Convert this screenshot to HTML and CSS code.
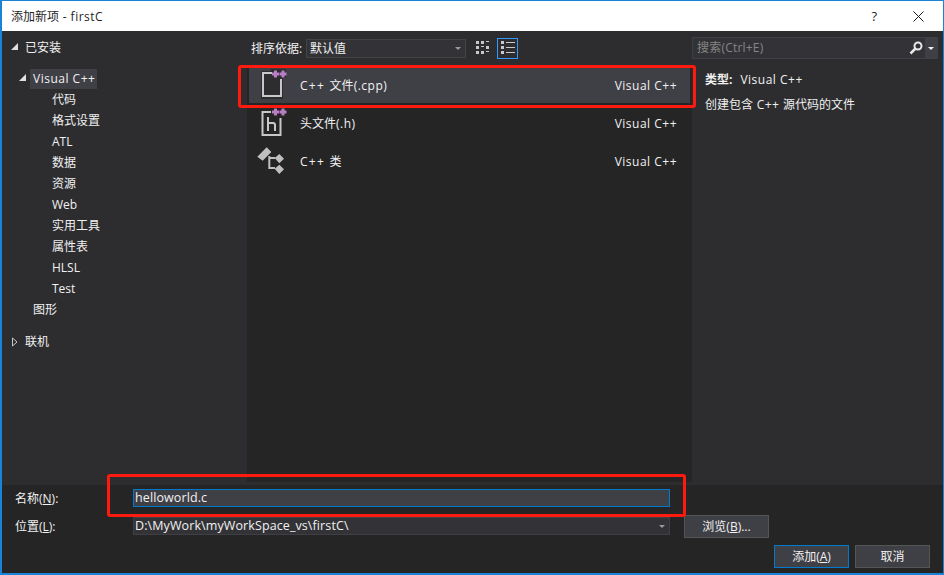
FILE: index.html
```html
<!DOCTYPE html>
<html lang="zh-CN">

<head>
    <meta charset="UTF-8">
    <meta name="viewport" content="width=device-width, initial-scale=1.0">
    <link rel="stylesheet" href="styles.css">
    <title>添加新项 - firstC</title>
</head>

<body>

    <div class="dialog">
        <div class="titlebar">
            <span class="title">添加新项<span class="lat"> - firstC</span></span>
            <span class="help">?</span>
            <svg class="close" width="11" height="11" viewBox="0 0 11 11"><path d="M.5.5l10 10M10.500.5l-10 10" stroke="#1e1e1e" fill="none"/></svg>
        </div>

        <div class="main">
            <div class="side">
                <div class="tree-row tree-top"><span class="arrow open"></span>已安装</div>
                <div class="tree-row tree-lang"><span class="arrow open"></span><span class="selected-node lat">Visual C++</span></div>
                <div class="tree-row tree-sub">代码</div>
                <div class="tree-row tree-sub">格式设置</div>
                <div class="tree-row tree-sub">ATL</div>
                <div class="tree-row tree-sub">数据</div>
                <div class="tree-row tree-sub">资源</div>
                <div class="tree-row tree-sub">Web</div>
                <div class="tree-row tree-sub">实用工具</div>
                <div class="tree-row tree-sub">属性表</div>
                <div class="tree-row tree-sub">HLSL</div>
                <div class="tree-row tree-sub">Test</div>
                <div class="tree-row tree-mid">图形</div>
                <div class="tree-row tree-top tree-online">
                    <svg class="arrow closed" width="6" height="10" viewBox="0 0 6 10"><path d="M.5 1v8L5 5z" fill="none" stroke="#c8c8c8"/></svg>联机
                </div>
            </div>

            <div class="center">
                <div class="toolbar">
                    <span class="sort-label">排序依据:</span>
                    <div class="combo">默认值<span class="combo-arrow"></span></div>
                    <svg class="view-btn" width="16" height="16" viewBox="0 0 16 16" fill="#c8c8c8">
                        <path d="M1 1h3v3H1zM6 1h3v3H6zM11 1h3v1h-3zM1 6h3v3H1zM6 6h3v1H6zM11 6h3v3h-3zM1 11h3v3H1zM6 11h3v3H6zM11 11h3v1h-3z"/>
                    </svg>
                    <div class="view-btn-active">
                        <svg width="16" height="16" viewBox="0 0 16 16" fill="#c8c8c8">
                            <path d="M1 1h3v3H1zM6 2h9v1H6zM1 6h3v3H1zM6 7h9v1H6zM1 11h3v3H1zM6 12h9v1H6z"/>
                        </svg>
                    </div>
                </div>
                <div class="list">
                    <div class="item item-selected">
                        <svg class="item-icon" width="32" height="32" viewBox="0 0 32 32">
                            <path d="M6 2h10V0h15v9h-3v21H6z" fill="#2d2d30"/>
                            <path d="M8 28V4h9M26 10v17H8" fill="none" stroke="#c8c8c8" stroke-width="2"/>
                            <path d="M17 3.500h2v-2h3v2h2v3h-2v2h-3v-2h-2zM24.500 3.500h2v-2h3v2h2v3h-2v2h-3v-2h-2z" fill="#b97fc4"/>
                        </svg>
                        <span class="item-name"><span class="lat-wide">C++ </span>文件<span class="lat">(.cpp)</span></span>
                        <span class="item-type lat">Visual C++</span>
                    </div>
                    <div class="item">
                        <svg class="item-icon" width="32" height="32" viewBox="0 0 32 32">
                            <path d="M7.500 28V4H16M25.500 10v17h-18" fill="none" stroke="#c8c8c8" stroke-width="2"/>
                            <path d="M13 9v14M13 15h5a2 2 0 0 1 2 2v6" fill="none" stroke="#c8c8c8" stroke-width="2"/>
                            <path d="M17 2.500h2v-2h3v2h2v3h-2v2h-3v-2h-2zM24.500 2.500h2v-2h3v2h2v3h-2v2h-3v-2h-2z" fill="#b97fc4"/>
                        </svg>
                        <span class="item-name">头文件<span class="lat">(.h)</span></span>
                        <span class="item-type lat">Visual C++</span>
                    </div>
                    <div class="item">
                        <svg class="item-icon" width="32" height="32" viewBox="0 0 32 32">
                            <path d="M2.300 10.700l9.400-9.400 4.600 4.700-8.600 8.700zM19.700 12l4.600-4 4.700 4.700-4.700 4.600zM19.700 22.700l4.600-4 4.700 4.600-4.700 4.700z" fill="#c0c0c0"/>
                            <path d="M14.300 10v12H20M14.300 12H20" fill="none" stroke="#c0c0c0" stroke-width="2"/>
                        </svg>
                        <span class="item-name"><span class="lat-wide">C++ </span>类</span>
                        <span class="item-type lat">Visual C++</span>
                    </div>
                </div>
            </div>

            <div class="info">
                <div class="search">
                    <span class="search-text">搜索(Ctrl+E)</span>
                    <div class="search-btn">
                        <svg width="14" height="14" viewBox="0 0 14 14"><circle cx="9" cy="5" r="3.500" fill="none" stroke="#e8e8e8" stroke-width="2"/><path d="M6.500 7.500L1.500 12.500" stroke="#e8e8e8" stroke-width="2.500"/></svg>
                    </div>
                    <div class="search-drop"><span class="combo-arrow arrow-light"></span></div>
                </div>
                <div class="info-type"><b>类型:</b><span class="lat">Visual C++</span></div>
                <div class="info-desc">创建包含<span class="lat"> C++ </span>源代码的文件</div>
            </div>
        </div>

        <div class="bottom">
            <div class="field">
                <label class="field-label">名称(<u>N</u>):</label>
                <div class="input input-focus">helloworld.c</div>
            </div>
            <div class="field field-path">
                <label class="field-label">位置(<u>L</u>):</label>
                <div class="input">D:\MyWork\myWorkSpace_vs\firstC\<span class="combo-arrow"></span></div>
                <div class="btn btn-browse">浏览(<u>B</u>)...</div>
            </div>
            <div class="actions">
                <div class="btn btn-default">添加(<u>A</u>)</div>
                <div class="btn">取消</div>
            </div>
        </div>

        <!-- 红框标注 -->
        <div class="mark mark-item"></div>
        <div class="mark mark-name"></div>
    </div>

</body>

</html>
```

FILE: styles.css
```css
* {
    margin: 0;
    padding: 0;
    box-sizing: border-box;
}

body {
    background-color: #fff;
    font-family: "Open Sans", "Noto Sans CJK SC", sans-serif;
    font-size: 12px;
    color: #f1f1f1;
    overflow: hidden;
}

.lat {
    letter-spacing: .5px;
}

.lat-wide {
    letter-spacing: 1.3px;
}

.dialog {
    position: relative;
    width: 944px;
    height: 575px;
    display: flex;
    flex-direction: column;
    border: 1px solid #1883d7;
    border-left-width: 2px;
    border-bottom-width: 2px;
    background-color: #2d2d30;
}

.titlebar {
    height: 30px;
    flex: none;
    display: flex;
    align-items: center;
    background-color: #fff;
    color: #1e1e1e;
    padding-left: 9px;
}

.title {
    flex: 1;
}

.help {
    font-size: 13px;
    margin-right: 36px;
}

.close {
    margin-right: 19px;
}

.main {
    flex: 1;
    display: flex;
    min-height: 0;
}

.side {
    width: 245px;
    flex: none;
    padding-top: 6px;
}

.tree-row {
    height: 21px;
    line-height: 21px;
    display: flex;
    align-items: center;
}

.tree-top {
    padding-left: 23px;
    position: relative;
}

.tree-lang {
    margin-top: 10px;
    padding-left: 28px;
    position: relative;
}

.tree-sub {
    padding-left: 50px;
}

.tree-mid {
    padding-left: 31px;
}

.tree-online {
    margin-top: 11px;
}

.selected-node {
    background-color: #3f3f46;
    padding: 0 2px 0 3px;
    height: 20px;
    line-height: 20px;
}

.arrow {
    position: absolute;
    top: 6px;
}

.tree-top .arrow {
    left: 9px;
}

.tree-lang .arrow {
    left: 17px;
}

.arrow.open {
    width: 0;
    height: 0;
    border-left: 7px solid transparent;
    border-bottom: 7px solid #e0e0e0;
}

.tree-top .arrow.closed {
    top: 6px;
    left: 10px;
}

.center {
    width: 445px;
    flex: none;
    display: flex;
    flex-direction: column;
}

.toolbar {
    height: 34px;
    flex: none;
    display: flex;
    align-items: center;
    padding-left: 4px;
}

.sort-label {
    width: 55px;
}

.combo {
    width: 160px;
    height: 19px;
    line-height: 17px;
    border: 1px solid #434346;
    background-color: #333337;
    padding-left: 3px;
    position: relative;
    margin-right: 9px;
}

.combo-arrow {
    position: absolute;
    right: 4px;
    top: 7px;
    width: 0;
    height: 0;
    border-left: 3px solid transparent;
    border-right: 3px solid transparent;
    border-top: 3px solid #999;
}

.arrow-light {
    border-top-color: #f1f1f1;
    right: 3px;
    top: 9px;
}

.view-btn {
    margin-right: 6px;
}

.view-btn-active {
    width: 21px;
    height: 21px;
    border: 1px solid #3399ff;
    display: flex;
    align-items: center;
    justify-content: center;
}

.list {
    flex: 1;
    margin-bottom: 3px;
    padding: 2px 2px 0;
    background-color: #252526;
}

.item {
    height: 38px;
    line-height: 36px;
    display: flex;
    align-items: center;
    padding: 0 13px 0 6px;
}

.item-selected {
    background-color: #3f3f46;
    height: 36px;
    margin-bottom: 2px;
}

.item-selected span {
    margin-top: 1px;
}

.item-icon {
    flex: none;
    margin-right: 13px;
}

.item-name {
    flex: 1;
}

.info {
    flex: 1;
    padding: 6px 5px 0 0;
}

.search {
    height: 22px;
    line-height: 22px;
    display: flex;
    align-items: center;
    background-color: #333337;
    border: 1px solid #3f3f46;
    position: relative;
    padding-left: 4px;
    margin-bottom: 8px;
}

.search-text {
    flex: 1;
    color: #858585;
    letter-spacing: .2px;
}

.search-btn {
    width: 16px;
    display: flex;
}

.search-drop {
    width: 12px;
    height: 20px;
    background-color: #3f3f46;
    position: relative;
}

.info-type {
    padding-left: 13px;
    height: 25px;
    line-height: 25px;
}

.info-type b {
    margin-right: 8px;
}

.info-desc {
    padding-left: 13px;
    line-height: 25px;
}

.bottom {
    height: 88px;
    flex: none;
    background-color: #252526;
    padding-top: 4px;
}

.field {
    display: flex;
    align-items: center;
    height: 18px;
    padding-left: 13px;
    margin-bottom: 10px;
}

.field-label {
    width: 118px;
}

.input {
    width: 537px;
    height: 18px;
    line-height: 16px;
    padding-left: 1px;
    background-color: #333337;
    border: 1px solid #3f3f46;
    position: relative;
    font-size: 12.500px;
    letter-spacing: .1px;
}

.input-focus {
    background-color: #3f3f46;
    border-color: #007acc;
}

.btn {
    width: 75px;
    height: 23px;
    line-height: 21px;
    text-align: center;
    background-color: #3f3f46;
    border: 1px solid #555;
}

.btn-browse {
    width: 85px;
    margin-left: 14px;
}

.btn-default {
    border-color: #007acc;
}

.actions {
    display: flex;
    justify-content: flex-end;
    gap: 6px;
    margin-top: 2px;
    padding-right: 13px;
}

/* 标注用的红框，盖在界面上面 */
.mark {
    position: absolute;
    border: 3px solid #ff1a10;
    border-radius: 3px;
}

.mark-item {
    left: 236px;
    top: 64px;
    width: 458px;
    height: 43px;
}

.mark-name {
    left: 105px;
    top: 473px;
    width: 579px;
    height: 43px;
}
```
